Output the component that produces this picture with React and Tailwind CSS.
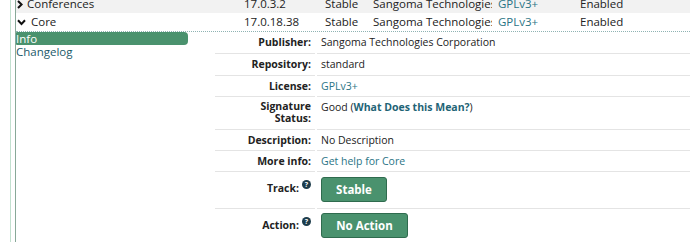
import React from "react";

function ChevronRight() {
  return (
    <svg width="6" height="9" viewBox="0 0 6 9" className="shrink-0">
      <polyline points="1,1 4.6,4.5 1,8" fill="none" stroke="#111" strokeWidth="2" />
    </svg>
  );
}

function ChevronDown() {
  return (
    <svg width="9" height="7" viewBox="0 0 9 7" className="shrink-0">
      <polyline points="1,1.3 4.5,5 8,1.3" fill="none" stroke="#111" strokeWidth="2" />
    </svg>
  );
}

function Help() {
  return (
    <svg width="9" height="9" viewBox="0 0 16 16" className="ml-[3px] mt-[-2px] shrink-0 self-start">
      <circle cx="8" cy="8" r="8" fill="#1d3c4b" />
      <text x="8" y="12.6" textAnchor="middle" fontSize="12.5" fontWeight="700" fill="#fff" fontFamily="'Open Sans', sans-serif">?</text>
    </svg>
  );
}

function ModRow({ bg, open, name, version }) {
  return (
    <div className={`flex h-[18px] items-center whitespace-nowrap text-[11.5px] leading-[18px] ${bg}`}>
      <div className={`flex w-[228px] items-center pl-[1px] ${open ? "gap-[5px]" : "gap-[4px]"}`}>
        {open ? <ChevronDown /> : <ChevronRight />}
        <span>{name}</span>
      </div>
      <div className="w-[81px]">{version}</div>
      <div className="w-[48px]">Stable</div>
      <div className="w-[125px]">
        <div className="w-[119px] overflow-hidden">Sangoma Technologies Corporation</div>
      </div>
      <div className="w-[82px] text-[#2a7485]">GPLv3+</div>
      <div>Enabled</div>
    </div>
  );
}

function DRow({ label, children, h, labelCls, valueCls }) {
  return (
    <div className={`flex ${h}`}>
      <div className={`flex w-[100px] justify-end border-b border-[#e4e4e4] pr-[4px] text-right font-bold ${labelCls}`}>
        {label}
      </div>
      <div className={`ml-[2px] flex-1 border-b border-[#e4e4e4] pl-[4px] ${valueCls}`}>{children}</div>
    </div>
  );
}

export default function App() {
  return (
    <div className="h-[242px] w-[690px] overflow-hidden bg-white font-['Open_Sans',sans-serif] text-[#222]">
      <div className="ml-[10px] h-[260px] border-l border-[#c2e0cf] pl-[4px]">
        <div className="-mt-[5px] h-[260px] border-l border-[#88a898]">
          <ModRow bg="bg-[#f2f2f2]" open={false} name="Conferences" version="17.0.3.2" />
          <ModRow bg="bg-white" open={true} name="Core" version="17.0.18.38" />
          <div className="flex border-t border-dotted border-[#8fb3b3]">
            <div className="w-[199px] text-[11.5px]">
              <div className="h-[13px] w-[172px] rounded-r-[4px] rounded-l-[1px] bg-[#4a926e] leading-[13px] text-white">
                Info
              </div>
              <div className="leading-[13px] text-[#1b5a6a]">Changelog</div>
            </div>
            <div className="w-[475px] text-[10.5px] leading-[13px]">
              <DRow label="Publisher:" h="h-[22px]" labelCls="pt-[4px]" valueCls="pt-[4px]">
                Sangoma Technologies Corporation
              </DRow>
              <DRow label="Repository:" h="h-[22px]" labelCls="pt-[4px]" valueCls="pt-[4px]">
                standard
              </DRow>
              <DRow label="License:" h="h-[21px]" labelCls="pt-[4px]" valueCls="pt-[4px]">
                <span className="text-[#2a7485]">GPLv3+</span>
              </DRow>
              <DRow label={<span>Signature<br />Status:</span>} h="h-[33px]" labelCls="pt-[4px] leading-[11.5px]" valueCls="pt-[3.5px]">
                Good (<span className="font-bold text-[#1f6476]">What Does this Mean?</span>)
              </DRow>
              <DRow label="Description:" h="h-[21px]" labelCls="pt-[4px]" valueCls="pt-[4px]">
                No Description
              </DRow>
              <DRow label="More info:" h="h-[21px]" labelCls="pt-[4px]" valueCls="pt-[4px]">
                <span className="text-[#2a7485]">Get help for Core</span>
              </DRow>
              <DRow label={<span className="flex items-start">Track:<Help /></span>} h="h-[37px]" labelCls="pt-[10px]" valueCls="pt-[5px]">
                <button className="flex h-[25px] w-[66px] items-center justify-center rounded-[3px] border border-[#2f6b4e] bg-[#4a926e] text-[11.5px] font-bold text-white">
                  Stable
                </button>
              </DRow>
              <DRow label={<span className="flex items-start">Action:<Help /></span>} h="h-[40px]" labelCls="pt-[10px]" valueCls="pt-[4px]">
                <button className="flex h-[25px] w-[87px] items-center justify-center rounded-[3px] border border-[#2f6b4e] bg-[#4a926e] text-[11.5px] font-bold text-white">
                  No Action
                </button>
              </DRow>
            </div>
          </div>
        </div>
      </div>
    </div>
  );
}
